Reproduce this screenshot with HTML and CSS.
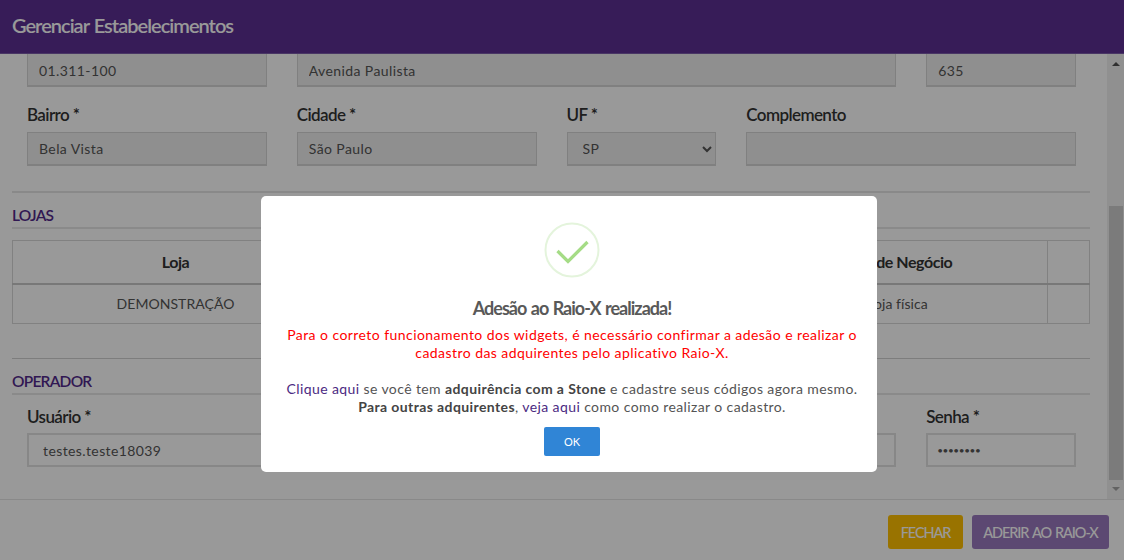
FILE: index.html
```html
<!DOCTYPE html>
<html lang="pt-BR">
<head>
<meta charset="utf-8">
<title>Gerenciar Estabelecimentos</title>
<link rel="stylesheet" href="styles.css">
</head>
<body>
<div class="app">
  <header class="top"><h1 class="top-title">Gerenciar Estabelecimentos</h1></header>
  <div class="middle">
    <main class="content">
      <div class="grid first">
        <div class="f s3"><input class="inp off" value="01.311-100" disabled></div>
        <div class="f s7"><input class="inp off" value="Avenida Paulista" disabled></div>
        <div class="f s2"><input class="inp off" value="635" disabled></div>
      </div>
      <div class="grid second">
        <div class="f s3"><label class="lab">Bairro *</label><input class="inp off" value="Bela Vista" disabled></div>
        <div class="f s3"><label class="lab">Cidade *</label><input class="inp off" value="São Paulo" disabled></div>
        <div class="f s2"><label class="lab">UF *</label><select class="inp off sel" disabled><option>SP</option></select></div>
        <div class="f s4"><label class="lab">Complemento</label><input class="inp off" disabled></div>
      </div>
      <hr class="rule rule-a">
      <h2 class="sect">LOJAS</h2>
      <table class="tbl">
        <colgroup><col class="c1"><col class="c2"><col class="c3"><col class="c4"></colgroup>
        <thead><tr><th>Loja</th><th></th><th>Tipo de Negócio</th><th></th></tr></thead>
        <tbody><tr><td>DEMONSTRAÇÃO</td><td></td><td>Loja física</td><td></td></tr></tbody>
      </table>
      <hr class="rule rule-b">
      <h2 class="sect">OPERADOR</h2>
      <div class="grid third">
        <div class="f s5"><label class="lab">Usuário *</label><input class="inp open" value="testes.teste18039"></div>
        <div class="f s5"><input class="inp open"></div>
        <div class="f s2"><label class="lab">Senha *</label><input class="inp open pw" type="password" value="12345678"></div>
      </div>
    </main>
    <div class="bar">
      <span class="arrow up"></span>
      <span class="thumb"></span>
      <span class="arrow down"></span>
    </div>
  </div>
  <footer class="foot">
    <button class="btn amber">FECHAR</button>
    <button class="btn violet">ADERIR AO RAIO-X</button>
  </footer>
</div>
<div class="shade"></div>
<section class="modal">
  <svg class="ok-icon" width="56" height="56" viewBox="0 0 56 56" aria-hidden="true">
    <circle cx="28" cy="28" r="26.5" fill="none" stroke="#e4f4dc" stroke-width="2"/>
    <path d="M13.5 29 L24 39.5 L43.5 20" fill="none" stroke="#a5dc86" stroke-width="3.2"/>
  </svg>
  <h2 class="m-title">Adesão ao Raio-X realizada!</h2>
  <p class="m-text red">Para o correto funcionamento dos widgets, é necessário confirmar a adesão e realizar o cadastro das adquirentes pelo aplicativo Raio-X.</p>
  <p class="m-text info"><a class="lnk">Clique aqui</a> se você tem <b>adquirência com a Stone</b> e cadastre seus códigos agora mesmo.<br><b>Para outras adquirentes</b>, <a class="lnk">veja aqui</a> como como realizar o cadastro.</p>
  <button class="ok">OK</button>
</section>
</body>
</html>
```
FILE: styles.css
```css
* { box-sizing: border-box; }
html, body { margin: 0; height: 100%; overflow: hidden; }
body { font-family: "Lato", "Liberation Sans", sans-serif; color: #555; background: #fff; font-size: 14px; }
.app { height: 560px; display: flex; flex-direction: column; }
.top { height: 54px; flex: none; background: #5c3093; border-bottom: 1px solid #7a5ba8; padding: 0 12px; display: flex; align-items: center; }
.top-title { margin: 0 0 4px; color: #fff; font-size: 20px; font-weight: 600; letter-spacing: -.98px; word-spacing: 1px; }
.middle { flex: 1; min-height: 0; display: flex; }
.content { flex: 1; min-width: 0; padding: 0 17px 0 12px; overflow: hidden; }
.grid { display: grid; grid-template-columns: repeat(12, 1fr); column-gap: 30px; padding: 0 14px 0 15px; }
.first { margin-top: -1px; }
.first .inp { padding-top: 2px; }
.second { margin-top: 18px; }
.third { margin-top: 12px; }
.third .lab { margin-bottom: 6px; }
.s2 { grid-column: span 2; }
.s3 { grid-column: span 3; }
.s4 { grid-column: span 4; }
.s5 { grid-column: span 5; }
.s7 { grid-column: span 7; }
.f { display: flex; flex-direction: column; justify-content: flex-end; min-width: 0; }
.lab { display: block; font-size: 17px; line-height: 20px; margin-bottom: 7px; font-weight: 600; color: #333; letter-spacing: -.6px; }
.inp { display: block; width: 100%; height: 34px; font: 14px "Lato", sans-serif; color: #555; letter-spacing: .4px; padding: 0 11px; border-radius: 0; outline: 0; margin: 0; }
.off { background: #eee; border: solid #d5d5d5; border-width: 1px 1px 2px 1px; opacity: 1; -webkit-text-fill-color: #555; }
.sel { padding-left: 11px; }
.open { background: #fff; padding-left: 14px; border: 2px solid #e2e2e2; }
.pw { padding-left: 9px; letter-spacing: -.4px; font-size: 10px; }
.rule { border: 0; height: 2px; background: #e4e4e4; margin: 0; }
.rule-a { margin-top: 25px; }
.rule-b { margin-top: 34px; height: 1px; background: #d0d0d0; }
.sect { margin: 13px 0 0; height: 23px; line-height: 18px; font-size: 15.5px; font-weight: 600; color: #52298a; letter-spacing: -.75px; border-bottom: 2px solid #e6e6e6; }
.rule-b + .sect { margin-top: 13px; }
.tbl { width: 100%; border-collapse: collapse; table-layout: fixed; margin-top: 11px; text-align: center; }
.c1 { width: 326px; }
.c2 { width: 409px; }
.c4 { width: 42px; }
.tbl th, .tbl td { border: 1px solid #d8d8d8; padding: 0; font-size: 14px; letter-spacing: .05px; }
.tbl th { height: 43px; font-size: 16px; font-weight: 700; color: #333; letter-spacing: -.45px; border-bottom: 2px solid #c8c8c8; }
.tbl td { height: 40px; }
.bar { width: 17px; flex: none; background: #f1f1f1; display: flex; flex-direction: column; align-items: center; }
.thumb { width: 14px; height: 274px; background: #cdcdcd; margin-top: 142px; }
.arrow { width: 0; height: 0; border-left: 4px solid transparent; border-right: 4px solid transparent; }
.up { border-bottom: 4px solid #505050; margin-top: 8px; margin-bottom: -2px; }
.down { border-top: 4px solid #a3a3a3; margin-top: 7px; }
.foot { height: 61px; flex: none; border-top: 1px solid #e5e5e5; padding: 15px 15px 0 0; display: flex; justify-content: flex-end; align-items: flex-start; gap: 9px; }
.btn { height: 34px; border: 0; border-radius: 3px; color: #fff; font: 500 14.5px "Lato", sans-serif; letter-spacing: -1.1px; word-spacing: 1.5px; padding: 0; }
.amber { width: 75px; background: #ffc000; }
.violet { width: 137px; background: #9a78be; }
.shade { position: fixed; inset: 0; background: rgba(0, 0, 0, .4); }
.modal { position: absolute; left: 261px; top: 196px; width: 616px; height: 276px; background: #fff; border-radius: 5px; padding-top: 26px; text-align: center; display: flex; flex-direction: column; align-items: center; }
.ok-icon { margin-left: 6px; flex: none; }
.m-title { margin: 18px 0 0 6px; font-size: 18px; line-height: 24px; font-weight: 700; color: #595959; letter-spacing: -.98px; word-spacing: 1px; }
.m-text { margin: 0 0 0 6px; width: 590px; line-height: 18px; font-size: 14px; }
.red { color: #f00; margin-top: 6px; letter-spacing: .44px; padding: 0 6px; }
.info { margin-top: 18px; color: #545454; letter-spacing: .4px; }
.info b { color: #444; }
.lnk { color: #4b2a82; }
.ok { margin: 11px 0 0 6px; width: 56px; height: 29px; border: 0; border-radius: 2px; background: #3085d6; color: #fff; font: 11px "Lato", sans-serif; padding: 0; }
```
